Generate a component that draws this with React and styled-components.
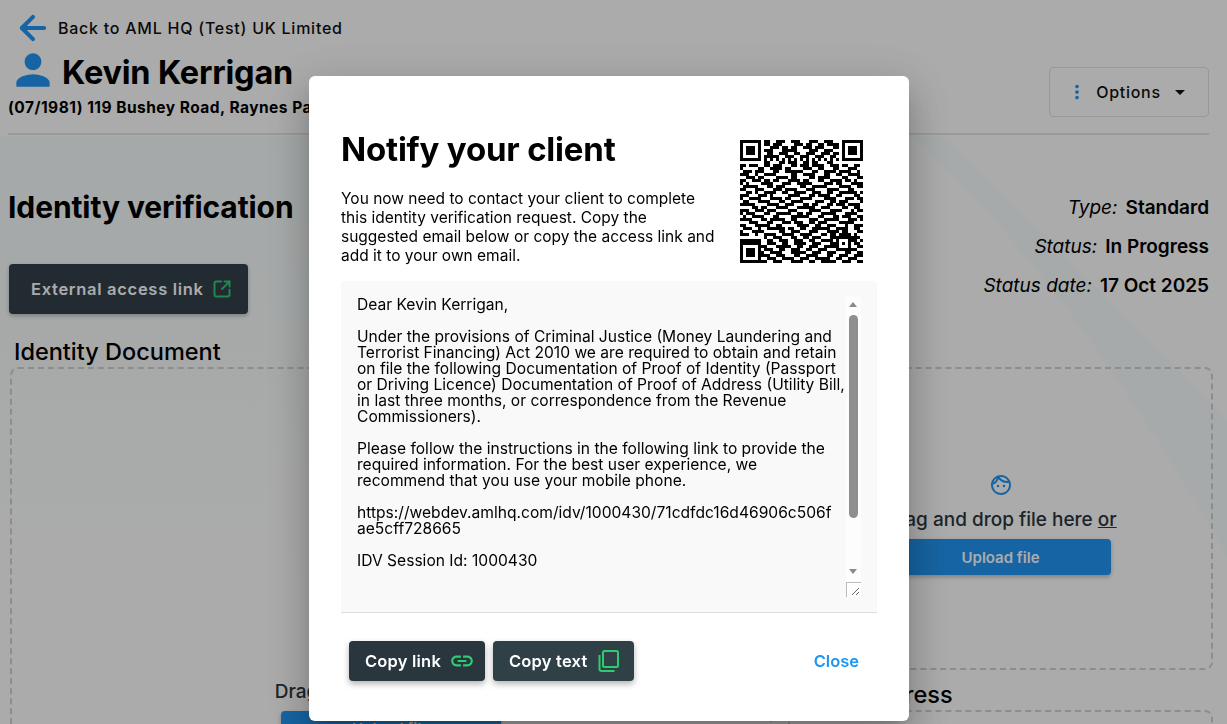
import React from "react"
import styled, { createGlobalStyle } from "styled-components"
import { MdPerson, MdMoreVert, MdArrowDropDown, MdOutlineFace, MdLink } from "react-icons/md"
import { ArrowLeft, SquareArrowOutUpRight } from "lucide-react"

const FONT = `"Inter", "Roboto", "Liberation Sans", sans-serif`

const finder = ["1111111", "1000001", "1011101", "1011101", "1011101", "1000001", "1111111"]
const topMiddle = [
	"011001110011100011100111000",
	"011011100001110110011011110",
	"000111011011001110111000110",
	"011100011111000011100111000",
	"001100111001100111001110110",
	"011111001110011100111001100",
	"010101010101010101010101010",
]
const midRows = [
	"00000000110001101110011011000110000000000",
	"11011100110111000110111011110011101100110",
	"10000011001111011000011100110001100011100",
	"01110111000110011111100011001111011110010",
	"11100100111100000110011110001100110011110",
	"00111011000011110110000110111100001100011",
	"11001110110110001111011000110011110110100",
	"10100001111000111001111100001110110001111",
	"01111100011011100000110011111000011110011",
	"11000111000111011110001110000111100011000",
	"00110100111100110011110011100110011111101",
	"11100011101000001111000110111100110000110",
	"10011110001111011000111100001111000111011",
	"01100011110001100111100001110011011100001",
	"11111000011110011100011011000110111011110",
	"00001101100011110001111110011100001100110",
	"11100111011100001110000111100011110001011",
	"10111000110011111001101100011111000111100",
	"01001111000110000111111000110001101110011",
	"11110001101111100110000111001111100011101",
	"00011100011000111011100110111000011111000",
	"11000111110011000001111001100111000100111",
	"01110010011111101100110011111100111100110",
	"10001111000001100111000111000111101100011",
	"11100100111100111100111100011011011110100",
	"00000000100111000110011011100011111111110",
	"11111110011001110011100110011110100011101",
]
const bottomRight = [
	"0011100110011110011100011101010110",
	"1100011111001100111001111100010011",
	"0111001100111001100111000111111100",
	"1001111000111110011100111000110011",
	"1110011100011001111000110011100111",
	"0011100111100111001111100110011100",
	"1100111000111100110011111001110011",
]
const qrRows = [
	...finder.map((f, i) => f + topMiddle[i] + f),
	...midRows,
	...finder.map((f, i) => f + bottomRight[i]),
]

const letterLines = [
	"Dear Kevin Kerrigan,",
	"",
	"Under the provisions of Criminal Justice (Money Laundering and",
	"Terrorist Financing) Act 2010 we are required to obtain and retain",
	"on file the following Documentation of Proof of Identity (Passport",
	"or Driving Licence) Documentation of Proof of Address (Utility Bill,",
	"in last three months, or correspondence from the Revenue",
	"Commissioners).",
	"",
	"Please follow the instructions in the following link to provide the",
	"required information. For the best user experience, we",
	"recommend that you use your mobile phone.",
	"",
	"https://webdev.amlhq.com/idv/1000430/71cdfdc16d46906c506f",
	"ae5cff728665",
	"",
	"IDV Session Id: 1000430",
]

const GlobalStyle = createGlobalStyle`
* {
	margin: 0;
	padding: 0;
	box-sizing: border-box;
}
body {
	height: 724px;
	overflow: hidden;
	background-color: #fff;
	color: #000;
	font-family: ${FONT};
}
`

const Swoosh = styled.svg`
	position: absolute;
	left: 0;
	top: 0;
	width: 1227px;
	height: 724px;
`
const Page = styled.div`
	position: relative;
	height: 724px;
	overflow: hidden;
`
const Content = styled.div`
	position: relative;
	width: 1209px;
	padding: 15px 0 0 8px;
`
const BackRow = styled.div`
	display: flex;
	align-items: center;
	height: 26px;
	padding-left: 6px;
	gap: 6px;
	font-size: 16px;
	font-weight: 500;
	letter-spacing: 0.75px;
	color: #111;
`
const Header = styled.div`
	display: flex;
	justify-content: space-between;
	height: 94px;
	border-bottom: 2px solid #e6e6e6;
`
const NameCol = styled.div`
	display: flex;
	flex-direction: column;
`
const NameRow = styled.div`
	display: flex;
	align-items: center;
	gap: 4px;
	height: 40px;
	margin-top: 11px;
`
const PersonIcon = styled(MdPerson)`
	margin-top: -4px;
	color: #2196f3;
`
const Name = styled.h1`
	font-size: 32.5px;
	font-weight: 700;
	letter-spacing: -0.2px;
`
const Address = styled.div`
	font-size: 15.5px;
	font-weight: 700;
	letter-spacing: 0.48px;
	margin-top: 6px;
	white-space: nowrap;
`
const OptionsButton = styled.button`
	display: flex;
	align-items: center;
	justify-content: center;
	width: 160px;
	height: 50px;
	margin-top: 26px;
	background: transparent;
	border: 1px solid #e4e4e4;
	border-radius: 4px;
	font-family: ${FONT};
	font-size: 16px;
	font-weight: 500;
	letter-spacing: 0.7px;
	color: #111;
`
const OptionsLabel = styled.span`
	margin: 0 7px 0 8px;
`
const Verification = styled.div`
	display: flex;
	justify-content: space-between;
	height: 204px;
	padding-top: 50px;
`
const VerificationLeft = styled.div`
	display: flex;
	flex-direction: column;
	align-items: flex-start;
`
const PageTitle = styled.h2`
	font-size: 30px;
	font-weight: 700;
	line-height: 44px;
	letter-spacing: -0.1px;
`
const ExternalButton = styled.button`
	display: flex;
	align-items: center;
	justify-content: flex-start;
	gap: 8px;
	width: 239px;
	height: 50px;
	margin: 35px 0 0 1px;
	padding-left: 22px;
	background: #33414a;
	border: 0;
	border-radius: 4px;
	box-shadow: 0 2px 4px rgba(0, 0, 0, 0.25);
	font-family: ${FONT};
	font-size: 16.5px;
	font-weight: 600;
	letter-spacing: 0.7px;
	color: #fff;
`
const Meta = styled.div`
	display: flex;
	flex-direction: column;
	align-items: flex-end;
	padding-top: 8px;
	gap: 11px;
`
const MetaRow = styled.div`
	display: flex;
	gap: 8px;
	height: 28px;
	align-items: center;
	font-size: 19px;
`
const MetaLabel = styled.em`
	font-weight: 400;
`
const MetaValue = styled.span`
	font-weight: 600;
`
const Columns = styled.div`
	display: grid;
	grid-template-columns: 762px 425px;
	gap: 16px;
	margin-left: 2px;
`
const Column = styled.div`
	display: flex;
	flex-direction: column;
`
const SectionTitle = styled.h3`
	font-size: 23.5px;
	font-weight: 500;
	line-height: 26px;
	padding-left: 4px;
	margin-bottom: 2px;
`
const DropZone = styled.div`
	display: flex;
	flex-direction: column;
	align-items: center;
	justify-content: center;
	height: ${props => props.$height}px;
	margin-bottom: 12px;
	padding-top: 11px;
	border: 2px dashed #d2d2d2;
	border-radius: 8px;
`
const FaceIcon = styled(MdOutlineFace)`
	font-size: 24px;
	color: #2196f3;
	margin-bottom: 11px;
`
const DropText = styled.div`
	font-size: 19px;
	font-weight: 500;
	color: #2b363c;
	white-space: nowrap;
`
const OrLink = styled.span`
	text-decoration: underline;
`
const UploadButton = styled.button`
	width: 220px;
	height: 36px;
	margin-top: 8px;
	background: #2196f3;
	border: 0;
	border-radius: 4px;
	box-shadow: 0 2px 4px rgba(0, 0, 0, 0.25);
	font-family: ${FONT};
	font-size: 15px;
	font-weight: 600;
	color: #fff;
`
const Backdrop = styled.div`
	position: fixed;
	inset: 0;
	display: flex;
	justify-content: center;
	align-items: flex-start;
	padding: 76px 9px 0 0;
	background: rgba(0, 0, 0, 0.33);
`
const Modal = styled.div`
	width: 600px;
	height: 645px;
	padding: 54px 32px 0;
	background: #fff;
	border-radius: 6px;
	box-shadow: 0 11px 15px -7px rgba(0, 0, 0, 0.2), 0 24px 38px 3px rgba(0, 0, 0, 0.14), 0 9px 46px 8px rgba(0, 0, 0, 0.12);
`
const ModalHead = styled.div`
	display: flex;
	justify-content: space-between;
	height: 134px;
	padding-right: 14px;
`
const ModalIntro = styled.div`
	width: 390px;
`
const ModalTitle = styled.h2`
	font-size: 33px;
	font-weight: 700;
	line-height: 38px;
	letter-spacing: -0.2px;
`
const ModalText = styled.p`
	margin-top: 21px;
	font-size: 15.5px;
	line-height: 19px;
	white-space: pre-line;
`
const LetterBox = styled.div`
	position: relative;
	height: 332px;
	margin-top: 17px;
	padding: 16px;
	background: #f9f9f9;
	border-bottom: 1px solid #dfdfdf;
	border-radius: 4px 4px 0 0;
	font-size: 15.6px;
	line-height: 16px;
	white-space: pre;
	overflow: hidden;
`
const Scrollbar = styled.div`
	position: absolute;
	left: 505px;
	top: 16px;
	width: 15px;
	height: 285px;
	background: #fdfdfd;
`
const ScrollArrow = styled.div`
	position: absolute;
	left: 3px;
	${props => (props.$down ? "top: 272px;" : "top: 5px;")}
	width: 0;
	height: 0;
	border-left: 4.5px solid transparent;
	border-right: 4.5px solid transparent;
	${props => (props.$down ? "border-top: 5px solid #8a8a8a;" : "border-bottom: 5px solid #8a8a8a;")}
`
const ScrollThumb = styled.div`
	position: absolute;
	left: 3px;
	top: 18px;
	width: 9px;
	height: 203px;
	background: #8f8f8f;
	border-radius: 5px;
`
const ResizeCorner = styled.svg`
	position: absolute;
	left: 505px;
	top: 301px;
	width: 15px;
	height: 15px;
`
const ModalFooter = styled.div`
	display: flex;
	align-items: center;
	gap: 8px;
	margin-top: 28px;
	padding: 0 18px 0 8px;
`
const CopyButton = styled.button`
	display: flex;
	align-items: center;
	gap: ${props => props.$gap}px;
	width: ${props => props.$width}px;
	height: 40px;
	padding-left: 16px;
	background: ${props => props.$bg};
	border: 0;
	border-radius: 4px;
	box-shadow: 0 3px 6px rgba(0, 0, 0, 0.3);
	font-family: ${FONT};
	font-size: 16.5px;
	font-weight: 600;
	letter-spacing: 0.2px;
	color: #fff;
`
const CloseButton = styled.button`
	margin-left: auto;
	background: none;
	border: 0;
	font-family: ${FONT};
	font-size: 16.5px;
	font-weight: 600;
	color: #2196f3;
`
const QrSvg = styled.svg`
	display: block;
	flex: none;
	width: 123px;
	height: 123px;
	margin-top: 10px;
	shape-rendering: crispEdges;
`

const QrCode = () => (
	<QrSvg viewBox="0 0 41 41">
		{qrRows.map((row, y) =>
			row.split("").map((cell, x) => (cell === "1" ? <rect key={`${x}-${y}`} x={x} y={y} width="1" height="1" /> : null))
		)}
	</QrSvg>
)

const CopyIcon = () => (
	<svg width="22" height="22" viewBox="0 0 22 22" fill="none" stroke="#2ecc71" strokeWidth="2">
		<rect x="5" y="1" width="15" height="16" rx="1.5" />
		<path d="M1.5 5v14a2 2 0 0 0 2 2h13" />
	</svg>
)

const DropArea = ({ height }) => (
	<DropZone $height={height}>
		<FaceIcon />
		<DropText>
			Drag and drop file here <OrLink>or</OrLink>
		</DropText>
		<UploadButton>Upload file</UploadButton>
	</DropZone>
)

const App = () => (
	<>
		<GlobalStyle />
		<Page>
			<Swoosh viewBox="0 0 1227 724">
				<defs>
					<linearGradient id="fade" x1="0" y1="0" x2="0" y2="1">
						<stop offset="0" stopColor="#f6fcfc" />
						<stop offset="1" stopColor="#ffffff" />
					</linearGradient>
				</defs>
				<rect x="0" y="136" width="310" height="440" fill="url(#fade)" />
				<path d="M912 136C1000 215 1110 350 1227 556V420C1170 360 1040 230 945 136Z" fill="#f9fefe" />
			</Swoosh>
			<Content>
				<BackRow>
					<ArrowLeft size={38} strokeWidth={2.6} color="#2196f3" />
					Back to AML HQ (Test) UK Limited
				</BackRow>
				<Header>
					<NameCol>
						<NameRow>
							<PersonIcon size={50} />
							<Name>Kevin Kerrigan</Name>
						</NameRow>
						<Address>(07/1981) 119 Bushey Road, Raynes Park, London</Address>
					</NameCol>
					<OptionsButton>
						<MdMoreVert size={22} color="#2196f3" />
						<OptionsLabel>Options</OptionsLabel>
						<MdArrowDropDown size={24} />
					</OptionsButton>
				</Header>
				<Verification>
					<VerificationLeft>
						<PageTitle>Identity verification</PageTitle>
						<ExternalButton>
							External access link
							<SquareArrowOutUpRight size={20} strokeWidth={2.4} color="#2ecc71" />
						</ExternalButton>
					</VerificationLeft>
					<Meta>
						<MetaRow>
							<MetaLabel>Type:</MetaLabel>
							<MetaValue>Standard</MetaValue>
						</MetaRow>
						<MetaRow>
							<MetaLabel>Status:</MetaLabel>
							<MetaValue>In Progress</MetaValue>
						</MetaRow>
						<MetaRow>
							<MetaLabel>Status date:</MetaLabel>
							<MetaValue>17 Oct 2025</MetaValue>
						</MetaRow>
					</Meta>
				</Verification>
				<Columns>
					<Column>
						<SectionTitle>Identity Document</SectionTitle>
						<DropArea height={646} />
					</Column>
					<Column>
						<SectionTitle>Selfie</SectionTitle>
						<DropArea height={303} />
						<SectionTitle>Proof Address</SectionTitle>
						<DropArea height={303} />
					</Column>
				</Columns>
			</Content>
			<Backdrop>
				<Modal>
					<ModalHead>
						<ModalIntro>
							<ModalTitle>Notify your client</ModalTitle>
							<ModalText>
								{"You now need to contact your client to complete\nthis identity verification request. Copy the\nsuggested email below or copy the access link and\nadd it to your own email."}
							</ModalText>
						</ModalIntro>
						<QrCode />
					</ModalHead>
					<LetterBox>
						{letterLines.join("\n")}
						<Scrollbar>
							<ScrollArrow />
							<ScrollThumb />
							<ScrollArrow $down />
						</Scrollbar>
						<ResizeCorner viewBox="0 0 15 15">
							<rect x="0.5" y="0.5" width="15" height="15" fill="#fff" stroke="#bbb" />
							<path d="M6 13L13 6M10 13L13 10" stroke="#666" strokeWidth="1" />
						</ResizeCorner>
					</LetterBox>
					<ModalFooter>
						<CopyButton $width={136} $gap={8} $bg="#29363d">
							Copy link
							<MdLink size={26} color="#2ecc71" />
						</CopyButton>
						<CopyButton $width={141} $gap={11} $bg="#304047">
							Copy text
							<CopyIcon />
						</CopyButton>
						<CloseButton>Close</CloseButton>
					</ModalFooter>
				</Modal>
			</Backdrop>
		</Page>
	</>
)

export default App
